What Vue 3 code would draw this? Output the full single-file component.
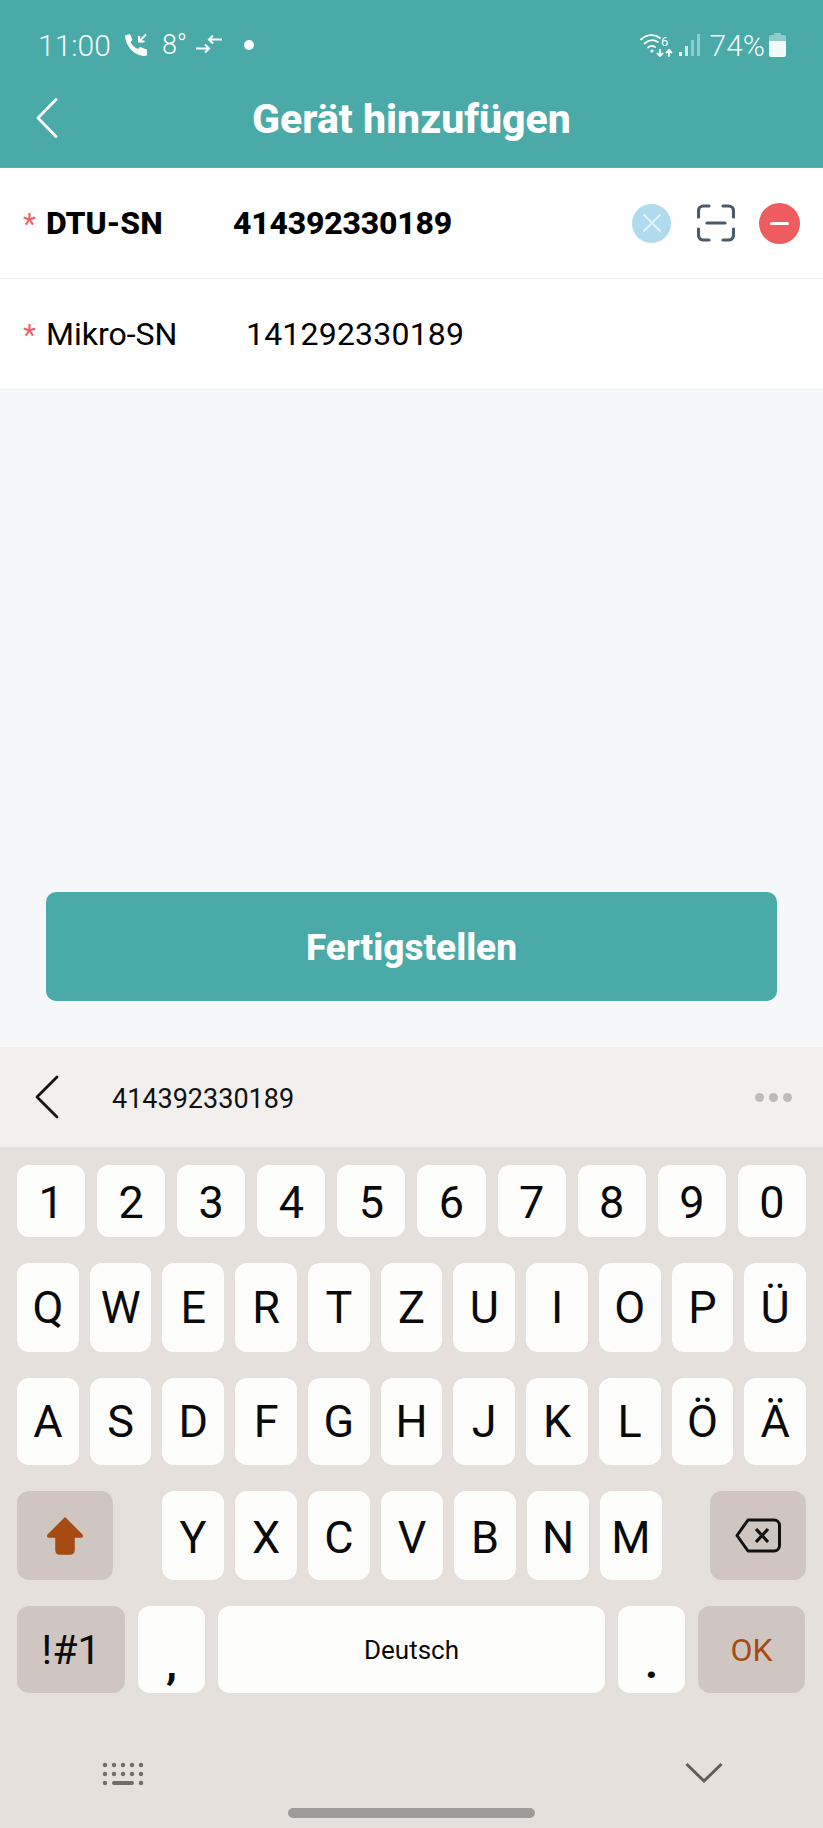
<template>
  <div class="screen">
    <header class="header">
      <div class="status">
        <span class="time">11:00</span>
        <svg class="call" width="24" height="24" viewBox="0 0 24 24">
          <path d="M1 2.500 L6 1 L8.500 7 L6.500 9 C7.500 11.500 10.500 14.500 14 16 L16 14 L23 16.500 L23 22.500 L19.500 23 C10 22 1.500 13.500 1 2.500 Z" fill="#fff" />
          <path d="M22 1.500 L15 8.500 M15 3 L15 8.500 L20.500 8.500" fill="none" stroke="#fff" stroke-width="2" />
        </svg>
        <span class="temp">8°</span>
        <svg class="sync" width="26" height="20" viewBox="0 0 26 20">
          <path d="M0 13.500 H13 M9 9.500 L13 13.500 L9 17.500 M26 4.500 H13 M17 .5 L13 4.500 L17 8.500" fill="none" stroke="#fff" stroke-width="2" />
        </svg>
        <span class="dot"></span>
        <span class="grow"></span>
        <svg class="wifi" width="33" height="24" viewBox="0 0 33 24">
          <g fill="none" stroke="#fff" stroke-width="1.800" stroke-linecap="round">
            <path d="M1 6.500 C7 1 15 1 20 5" />
            <path d="M4.500 10.500 C9 6.500 14 6.500 18 9" />
            <path d="M8 14.500 C10.500 12.500 13 12.500 15 14" />
            <path d="M20 17 V23 M17.500 20.500 L20 23 L22.500 20.500" />
            <path d="M29 23 V17 M26.500 19.500 L29 17 L31.500 19.500" />
          </g>
          <circle cx="12" cy="18" r="1.600" fill="#fff" />
          <text x="21" y="13" class="wifi-six">6</text>
        </svg>
        <svg class="signal" width="21" height="24" viewBox="0 0 21 24">
          <rect x="0" y="19" width="3" height="4" fill="#fff" />
          <rect x="6" y="13" width="3" height="10" fill="#fff" opacity=".75" />
          <rect x="12" y="7" width="3" height="16" fill="#fff" opacity=".4" />
          <rect x="18" y="1" width="3" height="22" fill="#fff" opacity=".4" />
        </svg>
        <span class="percent">74%</span>
        <svg class="battery" width="17" height="24" viewBox="0 0 17 24">
          <path d="M5 0 H12 V2 H15 A2 2 0 0 1 17 4 V10 H0 V4 A2 2 0 0 1 2 2 H5 Z" fill="#fff" opacity=".4" />
          <path d="M0 8 H17 V22 A2 2 0 0 1 15 24 H2 A2 2 0 0 1 0 22 Z" fill="#f2faf9" />
        </svg>
      </div>
      <div class="nav">
        <svg class="back" width="22" height="40" viewBox="0 0 22 40">
          <path d="M20 1.500 L2 20 L20 38.500" fill="none" stroke="#fff" stroke-width="2.800" stroke-linecap="round" stroke-linejoin="round" />
        </svg>
        <h1 class="title">Gerät hinzufügen</h1>
      </div>
    </header>

    <section class="form">
      <div class="row active">
        <span class="star">*</span>
        <span class="label">DTU-SN</span>
        <span class="value">414392330189</span>
        <span class="clear">
          <svg width="20" height="20" viewBox="0 0 20 20">
            <path d="M2 2 L18 18 M18 2 L2 18" stroke="#e3f3f9" stroke-width="2" stroke-linecap="round" />
          </svg>
        </span>
        <svg class="scan" width="38" height="38" viewBox="0 0 38 38">
          <path d="M1.500 13 V7 A5 5 0 0 1 6.500 2 H12 M26 2 H31.500 A5 5 0 0 1 36.500 7 V13 M36.500 25 V31 A5 5 0 0 1 31.500 36 H26 M12 36 H6.500 A5 5 0 0 1 1.500 31 V25 M10 19 H28" fill="none" stroke="#4d5a6a" stroke-width="3.200" stroke-linecap="round" />
        </svg>
        <span class="remove"><span class="bar"></span></span>
      </div>
      <div class="row second">
        <span class="star">*</span>
        <span class="label">Mikro-SN</span>
        <span class="value">141292330189</span>
      </div>
    </section>

    <main class="content">
      <button class="finish">Fertigstellen</button>
    </main>

    <section class="ime">
      <div class="suggest">
        <svg width="24" height="44" viewBox="0 0 24 44">
          <path d="M22 2 L2 22 L22 42" fill="none" stroke="#111" stroke-width="2.800" stroke-linecap="round" stroke-linejoin="round" />
        </svg>
        <span class="typed">414392330189</span>
        <span class="more"><i></i><i></i><i></i></span>
      </div>
      <div class="keys">
        <div class="keyrow digits">
          <span v-for="k in digits" :key="k" class="key">{{ k }}</span>
        </div>
        <div class="keyrow tall">
          <span v-for="k in rowOne" :key="k" class="key">{{ k }}</span>
        </div>
        <div class="keyrow short">
          <span v-for="k in rowTwo" :key="k" class="key">{{ k }}</span>
        </div>
        <div class="keyrow tall">
          <span class="key func wide">
            <svg width="38" height="39" viewBox="0 0 38 39">
              <path d="M19 2 L36 19 Q37 21 35 21 H28 V34 Q28 38 24 38 H14 Q10 38 10 34 V21 H3 Q1 21 2 19 Z" fill="#a64b12" stroke="#a64b12" stroke-linejoin="round" stroke-width="1.500" />
            </svg>
          </span>
          <span class="shift-gap"></span>
          <span v-for="k in rowThree" :key="k" class="key narrow low-text">{{ k }}</span>
          <span class="grow"></span>
          <span class="key func wide">
            <svg width="46" height="35" viewBox="0 0 46 35">
              <path d="M13 2 H39 A5.500 5.500 0 0 1 44.500 7.500 V27.500 A5.500 5.500 0 0 1 39 33 H13 L2 17.500 Z" fill="none" stroke="#111" stroke-width="3" stroke-linejoin="round" />
              <path d="M21 11 L33 24 M33 11 L21 24" stroke="#111" stroke-width="3.200" />
            </svg>
          </span>
        </div>
        <div class="keyrow short bottom">
          <span class="key func sym">!#1</span>
          <span class="key low comma">,</span>
          <span class="key space">Deutsch</span>
          <span class="key low period">.</span>
          <span class="key func ok">OK</span>
        </div>
      </div>
      <div class="tools">
        <svg width="42" height="24" viewBox="0 0 42 24">
          <g fill="#6f6c6a">
            <template v-for="y in [3, 12]" :key="y">
              <circle v-for="x in [3, 12, 21, 30, 39]" :key="x" :cx="x" :cy="y" r="2.200" />
            </template>
            <circle cx="3" cy="21" r="2.200" />
            <rect x="10" y="19" width="22" height="4" rx="2" />
            <circle cx="39" cy="21" r="2.200" />
          </g>
        </svg>
        <svg width="38" height="22" viewBox="0 0 38 22">
          <path d="M1.500 2 L19 19 L36.500 2" fill="none" stroke="#5f5c5a" stroke-width="3" />
        </svg>
      </div>
      <div class="home"></div>
    </section>
  </div>
</template>

<script setup>
const digits = ['1', '2', '3', '4', '5', '6', '7', '8', '9', '0']
const rowOne = ['Q', 'W', 'E', 'R', 'T', 'Z', 'U', 'I', 'O', 'P', 'Ü']
const rowTwo = ['A', 'S', 'D', 'F', 'G', 'H', 'J', 'K', 'L', 'Ö', 'Ä']
const rowThree = ['Y', 'X', 'C', 'V', 'B', 'N', 'M']
</script>

<style>
html, body {
  margin: 0;
  background: #f6f7f9;
}
</style>

<style scoped>
.screen {
  width: 823px;
  height: 1828px;
  display: flex;
  flex-direction: column;
  overflow: hidden;
  font-family: Roboto, "Liberation Sans", sans-serif;
  background: #f6f7f9;
  color: #000;
}
.header {
  height: 167px;
  flex: none;
  background: #4aaaa7;
  border-bottom: 1px solid #5aaeab;
  color: #fff;
}
.status {
  height: 90px;
  padding: 0 37px 0 38px;
  display: flex;
  align-items: center;
  box-sizing: border-box;
}
.time {
  font-size: 30px;
  font-weight: 300;
  opacity: .95;
}
.call {
  margin-left: 13px;
}
.temp {
  margin-left: 14px;
  font-size: 27px;
  font-weight: 300;
}
.sync {
  margin-left: 9px;
}
.dot {
  width: 10px;
  height: 10px;
  margin-left: 22px;
  border-radius: 50%;
  background: #fff;
}
.grow {
  flex: 1;
}
.wifi-six {
  font-size: 13px;
  fill: #fff;
}
.signal {
  margin-left: 6px;
}
.percent {
  margin-left: 10px;
  font-size: 30px;
  font-weight: 300;
  opacity: .95;
}
.battery {
  margin-left: 4px;
}
.nav {
  height: 58px;
  padding-left: 36px;
  display: grid;
  grid-template-columns: 1fr auto 1fr;
  padding-right: 36px;
  align-items: center;
}
.title {
  margin: 0;
  font-size: 41px;
  font-weight: 800;
}
.back {
  margin-top: -2px;
}
.form {
  flex: none;
  background: #fff;
}
.row {
  height: 110px;
  padding: 0 23px;
  display: flex;
  align-items: center;
  border-bottom: 1px solid #eeeff1;
  font-size: 32px;
}
.star {
  width: 23px;
  color: #ee6266;
  font-weight: 400;
  font-size: 30px;
}
.active {
  font-weight: 800;
}
.active .label {
  width: 187px;
}
.active .value {
  letter-spacing: -.2px;
}
.second .label {
  width: 200px;
}
.second .value {
  letter-spacing: .2px;
}
.clear {
  width: 39px;
  height: 39px;
  margin-left: auto;
  border-radius: 50%;
  background: #b0dbec;
  display: flex;
  align-items: center;
  justify-content: center;
}
.scan {
  margin-left: 26px;
}
.remove {
  width: 41px;
  height: 41px;
  margin-left: 24px;
  border-radius: 50%;
  background: #ee5c5f;
  display: flex;
  align-items: center;
  justify-content: center;
}
.bar {
  width: 19px;
  height: 3px;
  background: #fff;
  border-radius: 2px;
}
.content {
  flex: 1;
  display: flex;
  align-items: flex-end;
  padding: 0 46px 46px;
}
.finish {
  width: 100%;
  height: 109px;
  border: 0;
  border-radius: 10px;
  padding-top: 3px;
  background: #4aaaa7;
  color: #fff;
  font-family: inherit;
  font-size: 37px;
  font-weight: 800;
}
.ime {
  height: 781px;
  flex: none;
  background: #e5e0dc;
}
.suggest {
  height: 100px;
  padding: 0 31px 0 35px;
  display: flex;
  align-items: center;
  background: #f3efed;
}
.typed {
  margin-left: 53px;
  padding-top: 3px;
  font-size: 27px;
  color: #111;
}
.more {
  margin-left: auto;
  display: flex;
  gap: 5px;
}
.more i {
  width: 9px;
  height: 9px;
  border-radius: 50%;
  background: #bdbab8;
}
.keys {
  padding: 18px 17px 0;
  display: flex;
  flex-direction: column;
  gap: 26px;
}
.keyrow {
  display: flex;
  gap: 11px;
}
.digits {
  height: 72px;
  gap: 12px;
}
.digits .key {
  padding-top: 2px;
}
.tall {
  height: 89px;
}
.short {
  height: 87px;
}
.bottom {
  gap: 13px;
}
.key {
  flex: 1;
  min-width: 0;
  display: flex;
  align-items: center;
  justify-content: center;
  background: #fdfdfb;
  border-radius: 12px;
  font-size: 45px;
  color: #0a0a0a;
}
.func {
  background: #cfc6c2;
}
.wide {
  flex: none;
  width: 96px;
}
.shift-gap {
  width: 27px;
}
.narrow {
  flex: none;
  width: 62px;
}
.low-text {
  padding-top: 4px;
  box-sizing: border-box;
}
.sym {
  flex: none;
  width: 108px;
  font-size: 41px;
}
.low {
  flex: none;
  width: 67px;
  align-items: flex-end;
  line-height: 1;
  padding-bottom: 8px;
  box-sizing: border-box;
  font-weight: 700;
}
.space {
  flex: none;
  width: 387px;
  font-size: 26px;
}
.ok {
  flex: none;
  width: 107px;
  color: #a64b12;
  font-size: 32px;
}
.tools {
  margin-top: 69px;
  padding: 0 100px 0 102px;
  display: flex;
  justify-content: space-between;
  align-items: flex-start;
}
.home {
  width: 247px;
  height: 10px;
  margin: 22px auto 0;
  border-radius: 5px;
  background: #9e9a97;
}
</style>
